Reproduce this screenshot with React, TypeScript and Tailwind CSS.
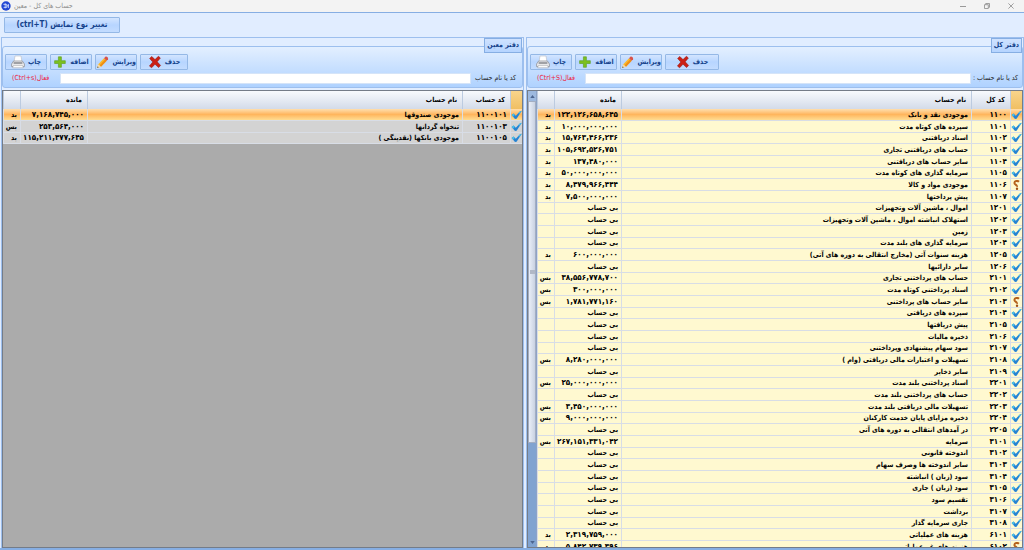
import clsx from "clsx";

type Account = {
  code: string;
  name: string;
  balance?: string;
  side?: string;
  unknown?: boolean;
};

const BED = "بد";
const BES = "بس";

const ledgerAccounts: Account[] = [
  { code: "1100", name: "موجودی نقد و بانک", balance: "122,126,658,645", side: BED },
  { code: "1101", name: "سپرده های کوتاه مدت", balance: "10,000,000,000", side: BED },
  { code: "1102", name: "اسناد دریافتنی", balance: "15,763,466,236", side: BED },
  { code: "1103", name: "حساب های دریافتنی تجاری", balance: "105,692,526,751", side: BED },
  { code: "1104", name: "سایر حساب های دریافتنی", balance: "137,480,000", side: BED },
  { code: "1105", name: "سرمایه گذاری های کوتاه مدت", balance: "50,000,000,000", side: BED },
  { code: "1106", name: "موجودی مواد و کالا", balance: "8,479,966,444", side: BED, unknown: true },
  { code: "1107", name: "پیش پرداختها", balance: "7,500,000,000", side: BED },
  { code: "1201", name: "اموال ، ماشین آلات وتجهیزات" },
  { code: "1202", name: "استهلاک انباشته اموال ، ماشین آلات وتجهیزات" },
  { code: "1203", name: "زمین" },
  { code: "1204", name: "سرمایه گذاری های بلند مدت" },
  { code: "1205", name: "هزینه سنوات آتی (مخارج انتقالی به دوره های آتی)", balance: "600,000,000", side: BED },
  { code: "1206", name: "سایر دارائیها" },
  { code: "2101", name: "حساب های پرداختنی تجاری", balance: "38,556,778,700", side: BES },
  { code: "2102", name: "اسناد پرداختنی کوتاه مدت", balance: "300,000,000", side: BES },
  { code: "2103", name: "سایر حساب های پرداختنی", balance: "1,781,771,160", side: BES, unknown: true },
  { code: "2104", name: "سپرده های دریافتی" },
  { code: "2105", name: "پیش دریافتها" },
  { code: "2106", name: "ذخیره مالیات" },
  { code: "2107", name: "سود سهام پیشنهادی وپرداختنی" },
  { code: "2108", name: "تسهیلات و اعتبارات مالی دریافتی (وام )", balance: "8,280,000,000", side: BES },
  { code: "2109", name: "سایر ذخایر" },
  { code: "2201", name: "اسناد پرداختنی بلند مدت", balance: "25,000,000,000", side: BES },
  { code: "2202", name: "حساب های پرداختنی بلند مدت" },
  { code: "2203", name: "تسهیلات مالی دریافتی بلند مدت", balance: "3,450,000,000", side: BES },
  { code: "2204", name: "ذخیره مزایای پایان خدمت کارکنان", balance: "9,000,000,000", side: BES },
  { code: "2205", name: "در آمدهای انتقالی به دوره های آتی" },
  { code: "3101", name: "سرمایه", balance: "267,151,331,042", side: BES },
  { code: "3102", name: "اندوخته قانونی" },
  { code: "3103", name: "سایر اندوخته ها وصرف سهام" },
  { code: "3104", name: "سود (زیان ) انباشته" },
  { code: "3105", name: "سود (زیان ) جاری" },
  { code: "3106", name: "تقسیم سود" },
  { code: "3107", name: "برداشت" },
  { code: "3108", name: "جاری سرمایه گذار" },
  { code: "6101", name: "هزینه های عملیاتی", balance: "2,319,759,000", side: BED },
  { code: "6102", name: "هزینه های غیرعملیاتی", balance: "5,842,739,396", side: BED, unknown: true },
];

const subAccounts: Account[] = [
  { code: "1100101", name: "موجودی صندوقها", balance: "7,168,745,000", side: BED },
  { code: "1100103", name: "تنخواه گردانها", balance: "253,564,000", side: BES },
  { code: "1100105", name: "موجودی بانکها (نقدینگی )", balance: "115,211,477,645", side: BED },
];

const toFa = (value: string) =>
  value.replace(/\d/g, (d) => "۰۱۲۳۴۵۶۷۸۹"[Number(d)]);

function CheckMark() {
  return (
    <svg viewBox="0 0 11 10" className="block h-[10px] w-full">
      <path d="M.6 5 2.6 3.6 4.8 5.8 8.8 1.4 10.8.8 5.6 8.8 4 9Z" fill="#2583d3" />
      <path d="M.6 5 2.6 3.6 3.8 4.8 2.2 6.8Z" fill="#4bbfe8" />
      <path d="M7.2 3.2 8.8 1.4 10.8.8 9 3.6Z" fill="#4bbfe8" />
    </svg>
  );
}

function QuestionMark() {
  return (
    <svg viewBox="0 0 11 10" className="block h-[10px] w-full">
      <path d="M8 1.8C6.6.4 3.4.8 3.4 2.9c0 1.8 2.9 1.8 2.5 3.9" fill="none" stroke="#b4601c" strokeWidth="2" />
      <circle cx="6" cy="8.7" r="1.2" fill="#a04f14" />
    </svg>
  );
}

function PrinterIcon() {
  return (
    <svg viewBox="0 0 14 14" className="size-[14px]">
      <path d="M4 1h6l1 6H3z" fill="#fff" stroke="#b9bcc2" strokeWidth=".6" />
      <path d="M2.6 6h8.8L13.4 9v2.6H.6V9z" fill="#ececee" stroke="#85878c" strokeWidth=".7" />
      <path d="M2.6 8h8.8" stroke="#55575c" strokeWidth="1" />
      <path d="M2.4 10.4h9.2l.8 2.4H1.6z" fill="#fafafa" stroke="#9a9ca0" strokeWidth=".5" />
    </svg>
  );
}

function PlusIcon() {
  return (
    <svg viewBox="0 0 14 14" className="size-[14px]">
      <path d="M5.4 1.8h3v3.9h3.9v2.8H8.4v3.8h-3V8.5H1.6V5.7h3.8z" fill="#7cc01f" stroke="#5b9c1b" strokeWidth=".6" />
    </svg>
  );
}

function PencilIcon() {
  return (
    <svg viewBox="0 0 14 14" className="size-[14px]">
      <path d="M2.4 9.4 8.4 3l2.8 2.8-6 6.2-3.8 1z" fill="#fbb829" />
      <path d="M3.6 10.6 9.8 4.2l1.4 1.6-6 6.2z" fill="#ee8e16" />
      <path d="M8.4 3 9.8 1.4c1.2-.8 3.4 1 2.8 2.6l-1.4 1.8z" fill="#d9534a" />
      <path d="M2.4 9.4 5.2 12l-3.8 1z" fill="#f7dcab" />
      <path d="m1.8 11.6 1 1-1.6.5z" fill="#222" />
    </svg>
  );
}

function DeleteIcon() {
  return (
    <svg viewBox="0 0 14 14" className="size-[14px]">
      <path d="M1.6 3.4 3.8 1.4 7 4.6l3.4-3.4 2 1.8L9.2 6.8l3.4 3.6-2 2.2L7 9.2l-3.4 3.6-2.2-1.8L4.8 7z" fill="#cb2015" stroke="#8f130c" strokeWidth=".5" />
    </svg>
  );
}

const buttonClass =
  "flex items-center justify-center rounded-[1px] border border-[#94b8e6] bg-linear-to-b from-[#d3e5ff] via-[#b7d5ff] via-50% to-[#c3dcff] font-bold text-[#15428b]";

const actions = [
  { label: "چاپ", icon: <PrinterIcon /> },
  { label: "اضافه", icon: <PlusIcon /> },
  { label: "ویرایش", icon: <PencilIcon /> },
  { label: "حذف", icon: <DeleteIcon /> },
];

type LedgerProps = {
  id: string;
  title: string;
  codeTitle: string;
  codeWidth: string;
  deleteWidth: string;
  searchLabel: string;
  hint: string;
  accounts: Account[];
  rowClass: string;
  scrollable?: boolean;
};

function AccountTable({ codeTitle, codeWidth, accounts, rowClass }: LedgerProps) {
  return (
    <table dir="rtl" className="w-full table-fixed border-separate border-spacing-0 text-right font-bold text-black">
      <colgroup>
        <col className="w-[12px]" />
        <col className={codeWidth} />
        <col />
        <col className="w-[67px]" />
        <col className="w-[17px]" />
      </colgroup>
      <thead>
        <tr className="h-[18px] bg-linear-to-b from-[#f8fafd] to-[#d3dbe9] text-[7px] leading-[11px] whitespace-nowrap [&>th]:border-l [&>th]:border-[#bccbe0] [&>th]:px-[5px]">
          <th className="bg-linear-to-b from-[#f8d58c] to-[#f0bf62]" />
          <th>{codeTitle}</th>
          <th>نام حساب</th>
          <th>مانده</th>
          <th />
        </tr>
      </thead>
      <tbody>
        {accounts.map((account, index) => (
          <tr
            key={account.code}
            className={clsx(
              "h-[12px] text-[8px] leading-[10px] whitespace-nowrap nth-[3n]:h-[11px] [&>td]:border-b [&>td]:border-l [&>td]:border-[#d8dde6]",
              index === 0
                ? "bg-linear-to-b from-[#ffdfae] via-[#ffb55c] via-45% to-[#ffe39a]"
                : rowClass
            )}
          >
            <td>{account.unknown ? <QuestionMark /> : <CheckMark />}</td>
            <td className="pr-[3px]">{toFa(account.code)}</td>
            <td className="pr-[3px] text-[7px]">{account.name}</td>
            <td className={clsx("pr-[3px]", !account.balance && "text-[7px]")}>
              {account.balance ? toFa(account.balance) : "بی حساب"}
            </td>
            <td className="pr-[3px] text-[7px]">{account.side}</td>
          </tr>
        ))}
      </tbody>
    </table>
  );
}

function LedgerPanel(props: LedgerProps) {
  return (
    <section className="flex min-w-0 flex-col border border-b-0 border-[#9dbfee]">
      <div className="relative mt-[8px] rounded-[3px] border border-[#9dbfee] bg-linear-to-b from-[#e3efff] to-[#afd2ff] px-[2px] pt-[7px] pb-[2px]">
        <h2 dir="rtl" className="absolute -top-[9px] right-0 flex h-[15px] items-center border border-[#86aee3] bg-linear-to-b from-[#cfe2ff] to-[#b5d4ff] px-[2px] text-[7px] font-bold text-[#15428b]">
          {props.title}
        </h2>
        <div className="flex gap-[3px]">
          {actions.map(({ label, icon }, index) => (
            <button
              key={label}
              className={clsx(
                buttonClass,
                index === actions.length - 1 ? props.deleteWidth : "w-[42px]",
                "h-[16px] gap-[3px] text-[7px]"
              )}
            >
              {icon}
              <span>{label}</span>
            </button>
          ))}
        </div>
        <div className="mt-[2px] flex h-[13px] items-center text-[7px]">
          <span dir="rtl" className="w-[55px] pl-[7px] text-left whitespace-nowrap text-[#ee1c3c]">
            {props.hint}
          </span>
          <input id={props.id} dir="rtl" className="h-[11px] min-w-0 flex-1 border border-[#d5e4f8] bg-white px-1 outline-none" />
          <label htmlFor={props.id} dir="rtl" className="w-[49px] text-center whitespace-nowrap text-[#222]">
            {props.searchLabel}
          </label>
        </div>
      </div>
      <div className="mt-[2px] flex min-h-0 flex-1 overflow-hidden border border-[#747c88] bg-[#ababab]">
        {props.scrollable && (
          <div className="flex w-[9px] shrink-0 flex-col border-r border-[#8ea3c6] bg-[#81a3d0]">
            <div className="flex h-[10px] items-center justify-center bg-[#9db9df]">
              <svg viewBox="0 0 6 4" className="h-[3px] w-[5px]">
                <path d="M0 4 3 0l3 4z" fill="#4c6590" />
              </svg>
            </div>
            <div className="flex h-3/4 items-center justify-center border border-[#a3aec2] bg-linear-to-r from-[#e9eef7] to-[#c9d2e2]">
              <span className="h-[4px] w-[5px] bg-[#b1b8c6]" />
            </div>
            <div className="mt-auto flex h-[9px] items-center justify-center">
              <svg viewBox="0 0 6 4" className="h-[3px] w-[5px]">
                <path d="m0 0 3 4 3-4z" fill="#4c6590" />
              </svg>
            </div>
          </div>
        )}
        <div className="min-w-0 flex-1">
          <AccountTable {...props} />
        </div>
      </div>
    </section>
  );
}

export default function App() {
  return (
    <div className="flex h-screen flex-col overflow-hidden bg-[#e1edff] font-['DejaVu_Sans_Condensed','DejaVu_Sans',sans-serif]">
      <header className="flex h-[12px] shrink-0 items-center bg-[#f3f3f3] pr-[10px] pl-px text-[7px] text-[#8d8d8d]">
        <svg viewBox="0 0 10 10" className="size-[10px]">
          <circle cx="5" cy="5" r="4.7" fill="#2348d4" />
          <path d="M2.4 3.4h3.4v3H2.6M4.2 2.2v5.2M5.8 4.8h2M7.4 3v4" fill="none" stroke="#dce6ff" strokeWidth=".8" />
        </svg>
        <h1 dir="rtl" className="ml-[3px]">حساب های کل - معین</h1>
        <div className="ml-auto flex items-center gap-[18px]">
          <button aria-label="Minimize">
            <svg viewBox="0 0 6 6" className="size-[6px]"><path d="M0 3.5h6" stroke="#999" /></svg>
          </button>
          <button aria-label="Restore">
            <svg viewBox="0 0 6 6" className="size-[6px]">
              <path d="M.5 1.7h3.8v3.8H.5zM1.7 1.5V.5h3.8v3.8h-1" fill="none" stroke="#8a8a8a" strokeWidth=".8" />
            </svg>
          </button>
          <button aria-label="Close">
            <svg viewBox="0 0 6 6" className="size-[6px]"><path d="m.4.4 5.2 5.2M5.6.4.4 5.6" stroke="#8a8a8a" strokeWidth=".8" /></svg>
          </button>
        </div>
      </header>
      <div className="shrink-0 border-t border-[#86aee3] p-[4px]">
        <button dir="rtl" className={clsx(buttonClass, "h-[16px] w-[116px] text-[8px]")}>
          تغییر نوع نمایش (ctrl+T)
        </button>
      </div>
      <main className="grid min-h-0 flex-1 grid-cols-[523fr_498fr] grid-rows-[minmax(0,1fr)] gap-[2px] border-b-2 border-[#86aee3] pl-px">
        <LedgerPanel
          id="sub-search"
          title="دفتر معین"
          codeTitle="کد حساب"
          codeWidth="w-[48px]"
          deleteWidth="w-[48px]"
          searchLabel="کد یا نام حساب"
          hint="فعال(Ctrl+s)"
          accounts={subAccounts}
          rowClass="bg-[#d3d3d3]"
        />
        <LedgerPanel
          id="ledger-search"
          title="دفتر کل"
          codeTitle="کد کل"
          codeWidth="w-[39px]"
          deleteWidth="w-[54px]"
          searchLabel="کد یا نام حساب :"
          hint="فعال(Ctrl+S)"
          accounts={ledgerAccounts}
          rowClass="bg-[#fff9d0]"
          scrollable
        />
      </main>
    </div>
  );
}
